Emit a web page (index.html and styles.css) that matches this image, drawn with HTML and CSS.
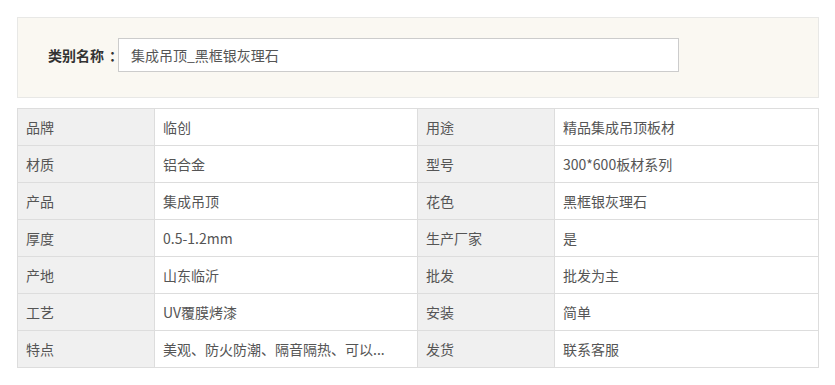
FILE: index.html
```html
<!DOCTYPE html>
<html lang="zh-CN">
<head>
<meta charset="utf-8">
<title>类别名称</title>
<link rel="stylesheet" href="styles.css">
</head>
<body>
<div class="page">
  <div class="panel">
    <span class="panel-label">类别名称<span class="colon">：</span></span>
    <div class="panel-input">集成吊顶_黑框银灰理石</div>
  </div>
  <table class="specs">
    <colgroup>
      <col class="c-key"><col class="c-val"><col class="c-key"><col class="c-val2">
    </colgroup>
    <tr><td class="key">品牌</td><td>临创</td><td class="key">用途</td><td>精品集成吊顶板材</td></tr>
    <tr><td class="key">材质</td><td>铝合金</td><td class="key">型号</td><td>300*600板材系列</td></tr>
    <tr><td class="key">产品</td><td>集成吊顶</td><td class="key">花色</td><td>黑框银灰理石</td></tr>
    <tr><td class="key">厚度</td><td>0.5-1.2mm</td><td class="key">生产厂家</td><td>是</td></tr>
    <tr><td class="key">产地</td><td>山东临沂</td><td class="key">批发</td><td>批发为主</td></tr>
    <tr><td class="key">工艺</td><td>UV覆膜烤漆</td><td class="key">安装</td><td>简单</td></tr>
    <tr><td class="key">特点</td><td>美观、防火防潮、隔音隔热、可以...</td><td class="key">发货</td><td>联系客服</td></tr>
  </table>
</div>
</body>
</html>
```

FILE: styles.css
```css
html, body {
  margin: 0;
  padding: 0;
  background: #ffffff;
}
body {
  font-family: "Noto Sans CJK SC", "Noto Sans", sans-serif;
  font-size: 14px;
  color: #555555;
}
.page {
  padding: 17px 17px 0 17px;
  width: 802px;
}
.panel {
  display: flex;
  align-items: center;
  background: #faf8f2;
  border: 1px solid #e8e8e6;
  padding: 20px 0 25px 30px;
}
.panel-label {
  flex: 0 0 70px;
  font-weight: bold;
  color: #333333;
  line-height: 20px;
  white-space: nowrap;
}
.colon {
  display: inline-block;
  width: 9px;
  padding-left: 5px;
}
.panel-input {
  box-sizing: border-box;
  width: 561px;
  height: 34px;
  border: 1px solid #cccccc;
  background: #ffffff;
  padding-left: 12px;
  line-height: 32px;
  color: #555555;
}
.specs {
  margin-top: 10px;
  width: 802px;
  border-collapse: collapse;
  table-layout: fixed;
}
.c-key { width: 137px; }
.c-val { width: 263px; }
.c-val2 { width: 264px; }
.specs td {
  border: 1px solid #dddddd;
  height: 36px;
  padding: 0 0 0 8px;
  line-height: 20px;
  white-space: nowrap;
  overflow: hidden;
}
.specs td.key {
  background: #f0f0f0;
}
```
